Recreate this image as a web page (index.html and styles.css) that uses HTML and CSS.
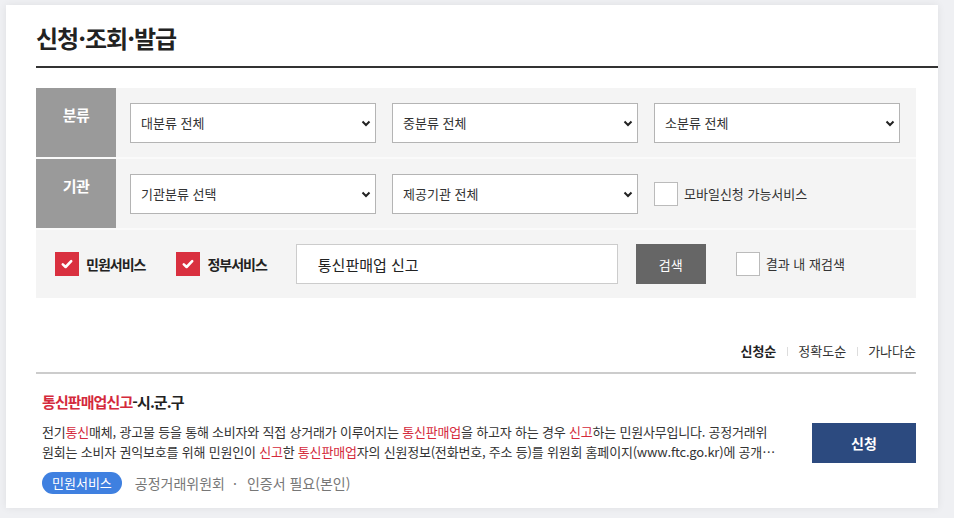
FILE: index.html
```html
<!DOCTYPE html>
<html lang="ko">
<head>
  <meta charset="UTF-8">
  <meta name="viewport" content="width=device-width, initial-scale=1.0">
  <title>신청·조회·발급</title>
  <link rel="stylesheet" href="styles.css">
</head>
<body>
  <div class="card">
    <h1 class="page-title">신청·조회·발급</h1>

    <!-- 검색 조건 -->
    <div class="filter">
      <div class="filter-row">
        <div class="filter-label">분류</div>
        <div class="filter-fields">
          <div class="select">
            <select><option>대분류 전체</option></select>
            <svg class="chevron" width="10" height="7" viewBox="0 0 10 7"><path d="M1.5 1.5 5 5l3.5-3.5" fill="none" stroke="#222" stroke-width="2"/></svg>
          </div>
          <div class="select">
            <select><option>중분류 전체</option></select>
            <svg class="chevron" width="10" height="7" viewBox="0 0 10 7"><path d="M1.5 1.5 5 5l3.5-3.5" fill="none" stroke="#222" stroke-width="2"/></svg>
          </div>
          <div class="select">
            <select><option>소분류 전체</option></select>
            <svg class="chevron" width="10" height="7" viewBox="0 0 10 7"><path d="M1.5 1.5 5 5l3.5-3.5" fill="none" stroke="#222" stroke-width="2"/></svg>
          </div>
        </div>
      </div>

      <div class="filter-row">
        <div class="filter-label">기관</div>
        <div class="filter-fields">
          <div class="select">
            <select><option>기관분류 선택</option></select>
            <svg class="chevron" width="10" height="7" viewBox="0 0 10 7"><path d="M1.5 1.5 5 5l3.5-3.5" fill="none" stroke="#222" stroke-width="2"/></svg>
          </div>
          <div class="select">
            <select><option>제공기관 전체</option></select>
            <svg class="chevron" width="10" height="7" viewBox="0 0 10 7"><path d="M1.5 1.5 5 5l3.5-3.5" fill="none" stroke="#222" stroke-width="2"/></svg>
          </div>
          <label class="check">
            <span class="box"></span>
            모바일신청 가능서비스
          </label>
        </div>
      </div>

      <div class="filter-row search-row">
        <label class="check check-strong">
          <span class="box checked"><svg width="24" height="24" viewBox="0 0 24 24"><path d="M7.8 12.4l2.8 2.6 5.6-5.8" fill="none" stroke="#fff" stroke-width="2.6" stroke-linecap="round" stroke-linejoin="round"/></svg></span>
          민원서비스
        </label>
        <label class="check check-strong">
          <span class="box checked"><svg width="24" height="24" viewBox="0 0 24 24"><path d="M7.8 12.4l2.8 2.6 5.6-5.8" fill="none" stroke="#fff" stroke-width="2.6" stroke-linecap="round" stroke-linejoin="round"/></svg></span>
          정부서비스
        </label>
        <input class="search-input" type="text" value="통신판매업 신고">
        <button class="search-btn">검색</button>
        <label class="check re-search">
          <span class="box"></span>
          결과 내 재검색
        </label>
      </div>
    </div>

    <!-- 정렬 -->
    <div class="sort">
      <a class="active">신청순</a>
      <span class="sep"></span>
      <a>정확도순</a>
      <span class="sep"></span>
      <a>가나다순</a>
    </div>

    <!-- 검색 결과 -->
    <div class="result">
      <div class="result-body">
        <div class="result-title"><em>통신판매업신고</em>-시.군.구</div>
        <p class="result-desc">전기<em>통신</em>매체, 광고물 등을 통해 소비자와 직접 상거래가 이루어지는 <em>통신판매업</em>을 하고자 하는 경우 <em>신고</em>하는 민원사무입니다. 공정거래위원회는 소비자 권익보호를 위해 민원인이 <em>신고</em>한 <em>통신판매업</em>자의 신원정보(전화번호, 주소 등)를 위원회 홈페이지(www.ftc.go.kr)에 공개하고 있습니다.</p>
        <div class="result-meta">
          <span class="badge">민원서비스</span>
          <span class="meta-text">공정거래위원회</span>
          <span class="dot">·</span>
          <span class="meta-text">인증서 필요(본인)</span>
        </div>
      </div>
      <button class="apply-btn">신청</button>
    </div>
  </div>
</body>
</html>
```

FILE: styles.css
```css
body {
  margin: 0;
  padding: 5px 16px 10px 6px;
  background-color: #eff0f3;
  font-family: "Noto Sans CJK KR", "Noto Sans", sans-serif;
  color: #333;
}

.card {
  background-color: #fff;
  padding: 0 22px 14px 30px;
  box-shadow: 0 0 8px rgba(0, 0, 0, 0.07);
}

.page-title {
  margin: 0 -22px 0 0;
  padding: 15px 0 10px;
  font-size: 24px;
  line-height: 36px;
  font-weight: 700;
  letter-spacing: -1px;
  color: #222;
  border-bottom: 2px solid #333;
}

/* filter box */
.filter {
  margin-top: 20px;
  background-color: #f4f4f4;
}

.filter-row {
  display: flex;
  height: 69px;
}

.filter-row + .filter-row {
  border-top: 2px solid #fafafa;
}

.filter-label {
  width: 80px;
  padding-top: 17px;
  box-sizing: border-box;
  background-color: #9a9a9a;
  color: #fff;
  font-size: 15px;
  line-height: 20px;
  font-weight: 700;
  letter-spacing: -0.5px;
  text-align: center;
}

.filter-fields {
  display: flex;
  align-items: center;
  gap: 16px;
  padding-left: 14px;
}

.select {
  position: relative;
}

.select select {
  appearance: none;
  -webkit-appearance: none;
  width: 246px;
  height: 40px;
  padding: 0 30px 0 10px;
  border: 1px solid #b4b4b4;
  border-radius: 0;
  background-color: #fff;
  font-family: inherit;
  font-size: 13px;
  color: #333;
}

.select .chevron {
  position: absolute;
  right: 5px;
  top: 17px;
  pointer-events: none;
}

.check {
  display: flex;
  align-items: center;
  gap: 6px;
  font-size: 13px;
  line-height: 20px;
  color: #333;
}

.check .box {
  width: 24px;
  height: 24px;
  box-sizing: border-box;
  border: 1px solid #bbb;
  background-color: #fff;
}

.check .box.checked {
  border: none;
  background-color: #d9303f;
}

.check .box svg {
  display: block;
}

.check-strong {
  gap: 7px;
  font-size: 14px;
  font-weight: 700;
  letter-spacing: -1px;
  color: #222;
}

.search-row {
  height: 68px;
  align-items: center;
  padding-left: 19px;
}

.search-row .check-strong + .check-strong {
  margin-left: 31px;
}

.search-input {
  width: 322px;
  height: 40px;
  margin-left: 29px;
  padding: 0 21px;
  box-sizing: border-box;
  border: 1px solid #ccc;
  font-family: inherit;
  font-size: 15px;
  color: #222;
}

.search-btn {
  width: 70px;
  height: 40px;
  margin-left: 18px;
  border: none;
  background-color: #666;
  color: #fff;
  font-family: inherit;
  font-size: 13px;
}

.re-search {
  margin-left: 30px;
}

/* sort */
.sort {
  display: flex;
  justify-content: flex-end;
  align-items: center;
  margin-top: 43px;
  padding-bottom: 11px;
  border-bottom: 2px solid #ccc;
  font-size: 13px;
  line-height: 20px;
}

.sort a {
  color: #333;
}

.sort a.active {
  font-weight: 700;
  color: #222;
}

.sort .sep {
  width: 1px;
  height: 9px;
  margin: 0 10px 0 11px;
  background-color: #ddd;
}

/* result */
.result {
  display: flex;
  align-items: center;
  padding: 18px 0 0 6px;
}

.result-body {
  width: 734px;
}

.result-title {
  font-size: 15px;
  line-height: 20px;
  font-weight: 700;
  letter-spacing: -0.9px;
  color: #222;
}

.result-title em,
.result-desc em {
  font-style: normal;
  color: #d42a3c;
}

.result-desc {
  margin: 10px 0 0;
  font-size: 13px;
  line-height: 20px;
  letter-spacing: -0.2px;
  color: #333;
  display: -webkit-box;
  -webkit-line-clamp: 2;
  -webkit-box-orient: vertical;
  overflow: hidden;
}

.result-meta {
  display: flex;
  align-items: center;
  margin-top: 10px;
  height: 22px;
}

.badge {
  height: 22px;
  padding: 0 10px;
  border-radius: 11px;
  background-color: #3f80e0;
  color: #fff;
  font-size: 13px;
  line-height: 22px;
}

.meta-text {
  font-size: 14px;
  color: #777;
}

.badge + .meta-text {
  margin-left: 13px;
}

.dot {
  margin: 0 10px 0 8px;
  font-size: 14px;
  color: #777;
}

.apply-btn {
  width: 104px;
  height: 40px;
  margin-left: auto;
  border: none;
  background-color: #2c4a7f;
  color: #fff;
  font-family: inherit;
  font-size: 14px;
  font-weight: 700;
}
```
